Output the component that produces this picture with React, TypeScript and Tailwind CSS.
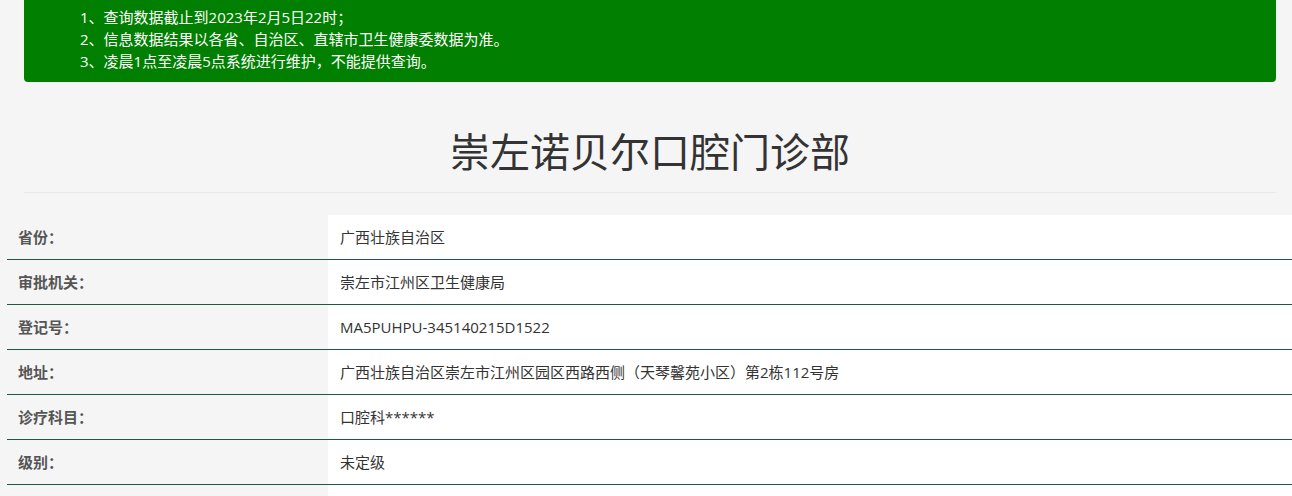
const notices = [
  "1、查询数据截止到2023年2月5日22时；",
  "2、信息数据结果以各省、自治区、直辖市卫生健康委数据为准。",
  "3、凌晨1点至凌晨5点系统进行维护，不能提供查询。",
];

const rows = [
  { label: "省份：", value: "广西壮族自治区" },
  { label: "审批机关：", value: "崇左市江州区卫生健康局" },
  { label: "登记号：", value: "MA5PUHPU-345140215D1522" },
  { label: "地址：", value: "广西壮族自治区崇左市江州区园区西路西侧（天琴馨苑小区）第2栋112号房" },
  { label: "诊疗科目：", value: "口腔科******" },
  { label: "级别：", value: "未定级" },
];

const latin = { fontFamily: '"Open Sans", "Noto Sans CJK SC", sans-serif' };

export default function App() {
  return (
    <div
      className="h-[496px] w-[1292px] overflow-hidden bg-[#f5f5f5]"
      style={{ fontFamily: '"Noto Sans CJK SC", "Liberation Sans", sans-serif' }}
    >
      <div
        className="ml-[24px] mr-[16px] rounded-b-[4px] bg-[#007f00] pl-[56px] pt-[6px] pb-[10px] text-[15px] leading-[22px] text-white"
        style={latin}
      >
        {notices.map((n) => (
          <div key={n}>{n}</div>
        ))}
      </div>

      <div className="ml-[24px] mr-[16px]">
        <h1 className="mt-[46px] text-center text-[40px] leading-[44px] text-[#333]">崇左诺贝尔口腔门诊部</h1>
        <div className="mt-[20px] border-t border-[#e8e8e8]" />
      </div>

      <div className="ml-[7px] mt-[22px] w-[1300px]">
        {rows.map((r) => (
          <div key={r.label} className="flex h-[45px] border-b border-[#1d5a3e]">
            <div className="flex w-[321px] items-center pl-[11px] text-[15px] font-bold text-[#555]">{r.label}</div>
            <div className="flex flex-1 items-center bg-white pl-[12px] text-[15px] text-[#333]" style={latin}>
              {r.value}
            </div>
          </div>
        ))}
        <div className="flex h-[20px]">
          <div className="w-[321px]" />
          <div className="flex-1 bg-white" />
        </div>
      </div>
    </div>
  );
}
